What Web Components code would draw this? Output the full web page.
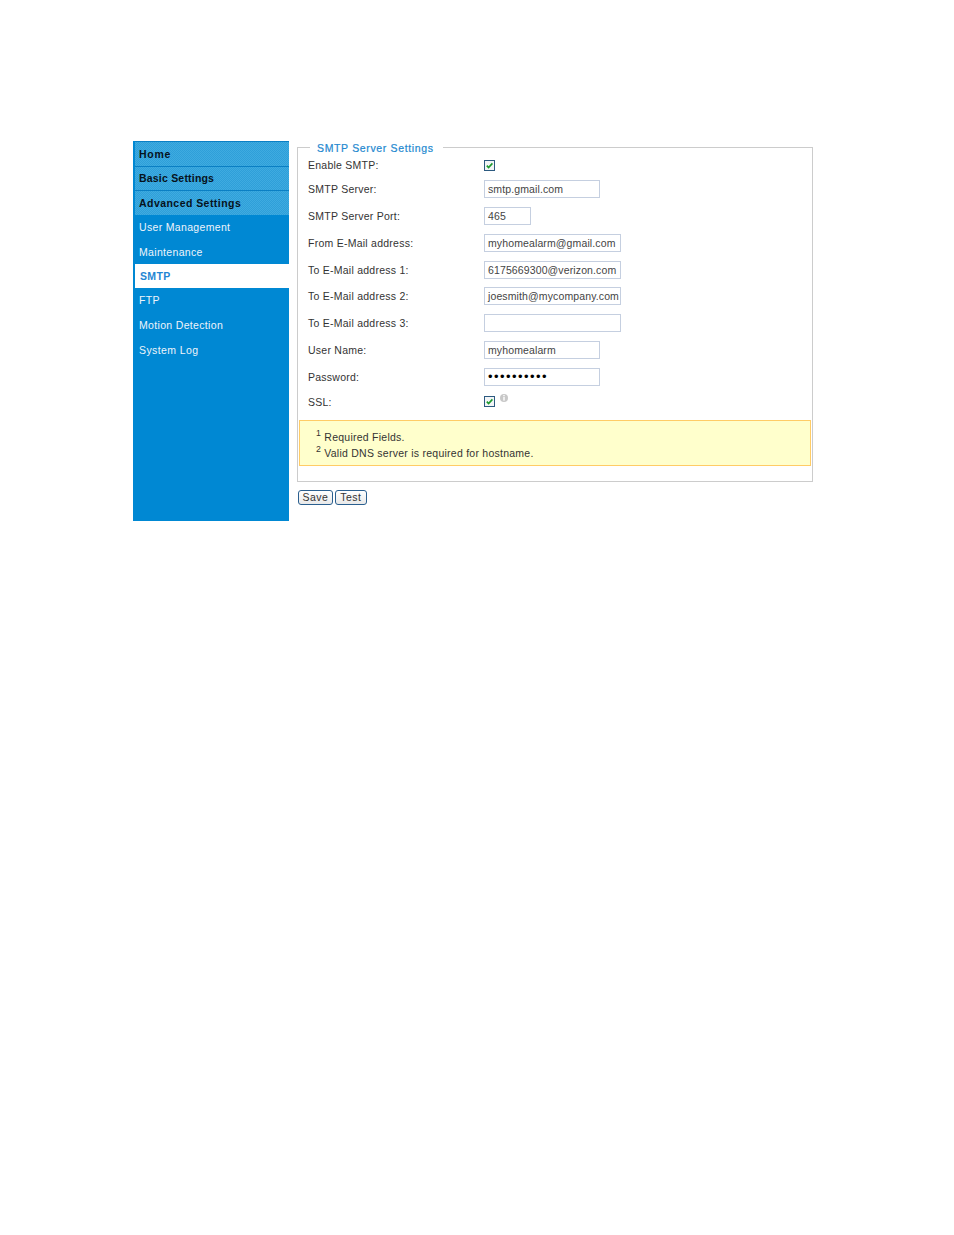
<!DOCTYPE html>
<html>
<head>
<meta charset="utf-8">
<title>SMTP Server Settings</title>
<style>
  html, body { margin: 0; background: #fff; }
  body { font-family: "Liberation Sans", Arial, sans-serif; font-size: 10.5px; letter-spacing: .25px; color: #333; }
</style>
</head>
<body>
<settings-page>
  <side-menu slot="menu">
    <menu-item kind="head" style="letter-spacing:.75px">Home</menu-item>
    <menu-item kind="head" style="letter-spacing:.2px;line-height:23px">Basic Settings</menu-item>
    <menu-item kind="head" style="letter-spacing:.45px">Advanced Settings</menu-item>
    <menu-item>User Management</menu-item>
    <menu-item style="line-height:26px">Maintenance</menu-item>
    <menu-item kind="active">SMTP</menu-item>
    <menu-item>FTP</menu-item>
    <menu-item>Motion Detection</menu-item>
    <menu-item style="line-height:26px;letter-spacing:.4px">System Log</menu-item>
  </side-menu>
  <settings-panel legend="SMTP Server Settings">
    <form-row label="Enable SMTP:" h="20"><check-box></check-box></form-row>
    <form-row label="SMTP Server:" h="27"><text-box w="116">smtp.gmail.com</text-box></form-row>
    <form-row label="SMTP Server Port:" h="27"><text-box w="47">465</text-box></form-row>
    <form-row label="From E-Mail address:" h="27"><text-box w="137">myhomealarm@gmail.com</text-box></form-row>
    <form-row label="To E-Mail address 1:" h="27"><text-box w="137">6175669300@verizon.com</text-box></form-row>
    <form-row label="To E-Mail address 2:" h="26"><text-box w="137">joesmith@mycompany.com</text-box></form-row>
    <form-row label="To E-Mail address 3:" h="27"><text-box w="137"></text-box></form-row>
    <form-row label="User Name:" h="27"><text-box w="116">myhomealarm</text-box></form-row>
    <form-row label="Password:" h="27"><text-box w="116" dots>••••••••••</text-box></form-row>
    <form-row label="SSL:" h="23"><check-box info></check-box></form-row>
    <note-box>
      <div><sup>1</sup> Required Fields.</div>
      <div><sup>2</sup> Valid DNS server is required for hostname.</div>
    </note-box>
  </settings-panel>
  <div slot="actions" style="display:flex;gap:2px">
    <push-button>Save</push-button>
    <push-button>Test</push-button>
  </div>
</settings-page>
<script>
class SettingsPage extends HTMLElement {
  constructor() {
    super();
    this.attachShadow({ mode: "open" });
    this.shadowRoot.innerHTML = `
      <style>
        :host { display: flex; gap: 8px; padding: 141px 0 0 133px; align-items: flex-start; }
        .main { display: flex; flex-direction: column; width: 516px; margin-top: -1px; }
        .actions { margin: 8px 0 0 1px; }
      </style>
      <slot name="menu"></slot>
      <div class="main">
        <slot></slot>
        <div class="actions"><slot name="actions"></slot></div>
      </div>`;
  }
}
class SideMenu extends HTMLElement {
  constructor() {
    super();
    this.attachShadow({ mode: "open" });
    this.shadowRoot.innerHTML = `
      <style>
        :host { display: block; width: 154px; height: 380px; padding-left: 2px; background: #0088d3; }
      </style>
      <slot></slot>`;
  }
}
class MenuItem extends HTMLElement {
  constructor() {
    super();
    this.attachShadow({ mode: "open" });
    this.shadowRoot.innerHTML = `
      <style>
        :host { display: block; height: 24.5px; line-height: 25px; padding-left: 4px; box-sizing: border-box;
          color: #eef4fb; font-size: 10.5px; letter-spacing: .33px; white-space: nowrap; }
        :host([kind="head"]) { color: #06121c; font-weight: bold;
          border-top: 1px solid #0a7fc4;
          background: repeating-conic-gradient(#2e9fd9 0 25%, #3fabe0 0 50%) 0 0 / 2px 2px; line-height: 24px; }
        :host([kind="active"]) { background: #fff; color: #1f86d3; font-weight: bold; padding-left: 5px; }
      </style>
      <slot></slot>`;
  }
}
class SettingsPanel extends HTMLElement {
  constructor() {
    super();
    this.attachShadow({ mode: "open" });
    this.shadowRoot.innerHTML = `
      <style>
        :host { display: block; }
        fieldset { margin: 0; padding: 0 1px 15px 1px; border: 1px solid #ccc; height: 325px; box-sizing: content-box; }
        legend { margin-left: 11px; padding: 2px 9px 0 7px; color: #2388cf; font-size: 10.5px; font-weight: normal; letter-spacing: .65px; line-height: 13px; -webkit-text-stroke: .2px #2388cf; }
      </style>
      <fieldset><legend></legend><slot></slot></fieldset>`;
    this.shadowRoot.querySelector("legend").textContent = this.getAttribute("legend");
  }
}
class FormRow extends HTMLElement {
  constructor() {
    super();
    this.attachShadow({ mode: "open" });
    this.shadowRoot.innerHTML = `
      <style>
        :host { display: flex; align-items: center; padding-left: 9px; color: #333; }
        .label { width: 176px; flex: none; }
        .field { display: flex; align-items: center; }
      </style>
      <div class="label"></div>
      <div class="field"><slot></slot></div>`;
    this.shadowRoot.querySelector(".label").textContent = this.getAttribute("label");
    this.style.height = this.getAttribute("h") + "px";
  }
}
class TextBox extends HTMLElement {
  constructor() {
    super();
    this.attachShadow({ mode: "open" });
    this.shadowRoot.innerHTML = `
      <style>
        :host { display: block; height: 18px; line-height: 16px; padding-left: 3px; box-sizing: border-box;
          border: 1px solid #c5cfe0; color: #444; background: #fff; white-space: nowrap; overflow: hidden; letter-spacing: .12px; }
        :host([dots]) { color: #000; letter-spacing: 1.45px; font-size: 13px; }
      </style>
      <slot></slot>`;
    this.style.width = this.getAttribute("w") + "px";
  }
}
class CheckBox extends HTMLElement {
  constructor() {
    super();
    this.attachShadow({ mode: "open" });
    const info = this.hasAttribute("info") ? `
      <svg class="info" width="8" height="8" viewBox="0 0 8 8">
        <circle cx="4" cy="4" r="4" fill="#c8c8c8"/>
        <rect x="3.3" y="1" width="1.4" height="1.3" fill="#fff"/>
        <rect x="3.3" y="3" width="1.4" height="3.6" fill="#fff"/>
      </svg>` : "";
    this.shadowRoot.innerHTML = `
      <style>
        :host { display: flex; align-items: flex-start; gap: 5px; }
        .info { margin-top: -2px; }
      </style>
      <svg width="11" height="11" viewBox="0 0 11 11">
        <rect x=".5" y=".5" width="10" height="10" fill="#f3f5f7" stroke="#2c5a80"/>
        <path d="M2.8 5.6 L4.6 7.6 L8.4 3.4" fill="none" stroke="#1c9a2c" stroke-width="1.6"/>
      </svg>${info}`;
  }
}
class NoteBox extends HTMLElement {
  constructor() {
    super();
    this.attachShadow({ mode: "open" });
    this.shadowRoot.innerHTML = `
      <style>
        :host { display: block; margin: 7px 0 0 0; height: 46px; width: 512px; box-sizing: border-box;
          border: 1px solid #fc6; background: #ffc; padding: 4px 0 0 16px; line-height: 16px; color: #333; }
        ::slotted(div) { height: 16px; }
      </style>
      <slot></slot>`;
  }
}
class PushButton extends HTMLElement {
  constructor() {
    super();
    this.attachShadow({ mode: "open" });
    this.shadowRoot.innerHTML = `
      <style>
        :host { display: block; height: 15px; line-height: 13px; padding: 0 3.5px; box-sizing: border-box; min-width: 32px; text-align: center;
          border: 1px solid #2a5f8f; border-radius: 3px; background: linear-gradient(#fff, #e9e9e9); color: #333; letter-spacing: .45px; }
      </style>
      <slot></slot>`;
  }
}
customElements.define("settings-page", SettingsPage);
customElements.define("side-menu", SideMenu);
customElements.define("menu-item", MenuItem);
customElements.define("settings-panel", SettingsPanel);
customElements.define("form-row", FormRow);
customElements.define("text-box", TextBox);
customElements.define("check-box", CheckBox);
customElements.define("note-box", NoteBox);
customElements.define("push-button", PushButton);
</script>
</body>
</html>
